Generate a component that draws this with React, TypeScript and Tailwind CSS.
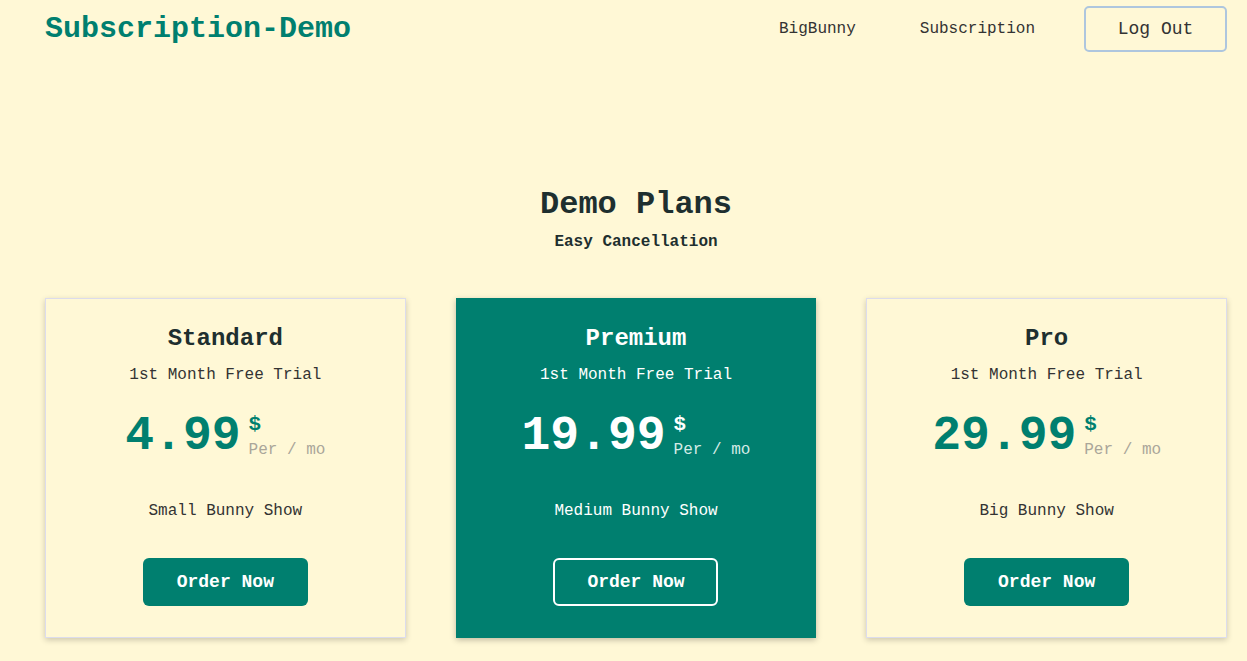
const plans = [
  { name: 'Standard', price: '4.99', desc: 'Small Bunny Show', featured: false },
  { name: 'Premium', price: '19.99', desc: 'Medium Bunny Show', featured: true },
  { name: 'Pro', price: '29.99', desc: 'Big Bunny Show', featured: false },
];

function PlanCard({ name, price, desc, featured }: (typeof plans)[number]) {
  return (
    <div
      className={
        featured
          ? 'flex flex-col items-center bg-[#007f6f] text-white shadow-[0_2px_6px_rgba(0,0,0,0.25)] pt-[23px] pb-[32px]'
          : 'flex flex-col items-center bg-[#fff8d6] border border-[#dcdcec] text-[#1e2f2f] shadow-[0_2px_6px_rgba(0,0,0,0.2)] pt-[22px] pb-[31px]'
      }
    >
      <h3 className="text-[24px] leading-[36px] font-bold">{name}</h3>
      <p className={`mt-[6px] text-[16px] leading-[24px] ${featured ? 'text-white' : 'text-[#333]'}`}>
        1st Month Free Trial
      </p>
      <div className="mt-[25px] flex items-start">
        <span className={`text-[48px] leading-[48px] font-bold ${featured ? 'text-white' : 'text-[#007f6f]'}`}>
          {price}
        </span>
        <div className="ml-[8px] flex flex-col items-start">
          <span className={`text-[21px] leading-[26px] font-bold ${featured ? 'text-white' : 'text-[#007f6f]'}`}>
            $
          </span>
          <span className={`text-[16px] leading-[24px] ${featured ? 'text-[#d4ebe6]' : 'text-[#aaa69a]'}`}>
            Per / mo
          </span>
        </div>
      </div>
      <p className={`mt-[37px] text-[16px] leading-[24px] ${featured ? 'text-white' : 'text-[#333]'}`}>{desc}</p>
      <button
        className={
          featured
            ? 'mt-[35px] w-[165px] h-[48px] rounded-[6px] border-2 border-white text-white text-[18px] font-bold'
            : 'mt-[35px] w-[165px] h-[48px] rounded-[6px] bg-[#007f6f] text-white text-[18px] font-bold'
        }
      >
        Order Now
      </button>
    </div>
  );
}

export default function App() {
  return (
    <div
      className="min-h-screen bg-[#fff8d6] text-[#1e2f2f]"
      style={{ fontFamily: '"Liberation Mono", "Courier New", monospace' }}
    >
      <header className="flex items-center justify-between pl-[45px] pr-[20px] pt-[6px]">
        <h1 className="text-[30px] leading-[45px] font-bold text-[#007f6f]">Subscription-Demo</h1>
        <nav className="flex items-center">
          <a className="text-[16px] text-[#333]">BigBunny</a>
          <a className="ml-[64px] text-[16px] text-[#333]">Subscription</a>
          <button className="ml-[49px] w-[143px] h-[46px] rounded-[5px] border-2 border-[#aec6de] text-[18px] text-[#333]">
            Log Out
          </button>
        </nav>
      </header>

      <section className="pl-[45px] pr-[20px]">
        <div className="mt-[133px] flex flex-col items-center">
          <h2 className="text-[32px] leading-[40px] font-bold">Demo Plans</h2>
          <p className="mt-[5px] text-[16px] leading-[24px] font-bold">Easy Cancellation</p>
        </div>
        <div className="mt-[44px] grid grid-cols-3 gap-[50px]">
          {plans.map((p) => (
            <PlanCard key={p.name} {...p} />
          ))}
        </div>
      </section>
    </div>
  );
}
